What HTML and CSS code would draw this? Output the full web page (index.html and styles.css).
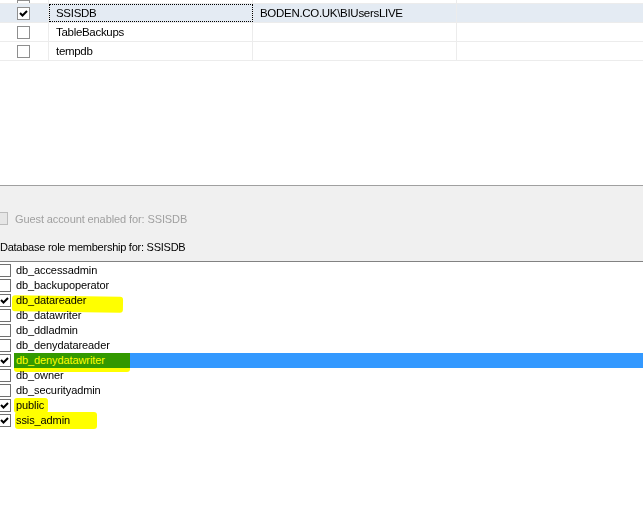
FILE: index.html
```html
<!DOCTYPE html>
<html lang="en">
<head>
    <meta charset="UTF-8">
    <title>Login Properties - User Mapping</title>
    <link rel="stylesheet" href="styles.css">
</head>
<body>
    <!-- databases mapped to this login -->
    <div class="grid">
        <div class="row stub">
            <div class="cell chk"><span class="box"></span></div>
            <div class="cell"></div>
            <div class="cell"></div>
            <div class="cell"></div>
        </div>
        <div class="row sel">
            <div class="cell chk"><span class="box"><svg class="tick" viewBox="0 0 11 11"><path d="M2 5l2.5 2.5L9 3"/></svg></span></div>
            <div class="cell focus">SSISDB</div>
            <div class="cell">BODEN.CO.UK\BIUsersLIVE</div>
            <div class="cell"></div>
        </div>
        <div class="row">
            <div class="cell chk"><span class="box"></span></div>
            <div class="cell">TableBackups</div>
            <div class="cell"></div>
            <div class="cell"></div>
        </div>
        <div class="row">
            <div class="cell chk"><span class="box"></span></div>
            <div class="cell">tempdb</div>
            <div class="cell"></div>
            <div class="cell"></div>
        </div>
    </div>

    <div class="panel">
        <div class="guest">
            <span class="box off"></span>
            <span>Guest account enabled for: SSISDB</span>
        </div>
        <div class="caption">Database role membership for: SSISDB</div>
    </div>

    <ul class="roles">
        <li><span class="box"></span><span class="name">db_accessadmin</span></li>
        <li><span class="box"></span><span class="name">db_backupoperator</span></li>
        <li><span class="box"><svg class="tick" viewBox="0 0 11 11"><path d="M2 5l2.5 2.5L9 3"/></svg></span><span class="name">db_datareader</span><span class="mark m1"></span></li>
        <li><span class="box"></span><span class="name">db_datawriter</span></li>
        <li><span class="box"></span><span class="name">db_ddladmin</span></li>
        <li><span class="box"></span><span class="name">db_denydatareader</span></li>
        <li class="picked"><span class="box"><svg class="tick" viewBox="0 0 11 11"><path d="M2 5l2.5 2.5L9 3"/></svg></span><span class="name">db_denydatawriter</span><span class="mark m2"></span></li>
        <li><span class="box"></span><span class="name">db_owner</span></li>
        <li><span class="box"></span><span class="name">db_securityadmin</span></li>
        <li><span class="box"><svg class="tick" viewBox="0 0 11 11"><path d="M2 5l2.5 2.5L9 3"/></svg></span><span class="name">public</span><span class="mark m3"></span></li>
        <li><span class="box"><svg class="tick" viewBox="0 0 11 11"><path d="M2 5l2.5 2.5L9 3"/></svg></span><span class="name">ssis_admin</span><span class="mark m4"></span></li>
    </ul>
</body>
</html>
```

FILE: styles.css
```css
/* page */
body { margin: 0; background: #fff; font-family: "Liberation Sans", Arial, sans-serif; font-size: 11px; letter-spacing: -0.1px; color: #000; overflow: hidden; width: 643px; height: 520px; }

/* checkbox */
.box { display: inline-flex; align-items: center; justify-content: center; box-sizing: border-box; width: 13px; height: 13px; border: 1px solid #707070; background: #fff; flex: none; }
.tick { width: 11px; height: 11px; }
.tick path { fill: none; stroke: #000; stroke-width: 2; }

/* top grid */
.grid { font-size: 11.5px; letter-spacing: -0.3px; }
.row { display: grid; grid-template-columns: 49px 204px 204px 1fr; box-sizing: border-box; height: 19px; border-bottom: 1px solid #ececec; }
.row.stub { height: 4px; overflow: hidden; }
.row.stub .chk { align-items: flex-end; }
.row.stub .box { margin-bottom: 1px; height: 13px; border-color: #d0d0d0; }
.row.sel { background: #e4ebf3; }
.cell { box-sizing: border-box; border-right: 1px solid #ececec; padding-left: 7px; display: flex; align-items: center; white-space: nowrap; }
.cell:last-child { border-right: none; }
.cell.chk { padding-left: 17px; }
.cell.chk .box { border-color: #8e8e8e; }
.cell.focus { outline: 1px dotted #000; outline-offset: -1px; }

/* gray panel */
.panel { margin-top: 124px; background: #f0f0f0; border-top: 1px solid #a0a0a0; border-bottom: 1px solid #828282; padding: 25px 0 6px; }
.guest { display: flex; align-items: center; gap: 7px; height: 15px; color: #a0a0a0; }
.guest .box { margin-left: -5px; border-color: #bcbcbc; background: #e6e6e6; }
.caption { margin-top: 14px; height: 15px; line-height: 15px; letter-spacing: -0.25px; }

/* role list */
.roles { list-style: none; margin: 0; padding: 1px 0 0; }
.roles li { position: relative; display: flex; align-items: center; height: 15px; }
.roles .box { margin-left: -2px; }
.roles .name { flex: 1; margin-left: 3px; padding-left: 2px; height: 15px; line-height: 15px; }
.roles li.picked .name { background: #3399ff; color: #fff; }

/* highlighter marks drawn over the list */
.mark { position: absolute; background: #ffff00; mix-blend-mode: multiply; border-radius: 3px; }
.m1 { left: 12px; top: 3px; width: 111px; height: 16px; transform: rotate(0.8deg); }
.m2 { left: 14px; top: 0; width: 116px; height: 19px; border-radius: 0 0 3px 3px; }
.m3 { left: 14px; top: 0; width: 34px; height: 15px; }
.m4 { left: 15px; top: -1px; width: 82px; height: 17px; }
```
